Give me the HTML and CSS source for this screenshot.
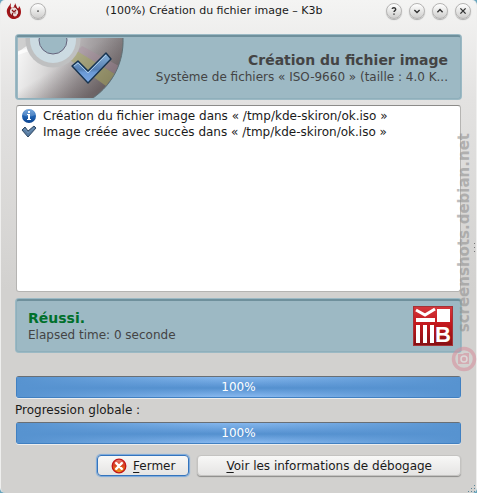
FILE: index.html
```html
<!DOCTYPE html>
<html lang="fr">
<head>
  <meta charset="UTF-8" />
  <meta name="viewport" content="width=device-width, initial-scale=1.0" />
  <title>(100%) Création du fichier image – K3b</title>
  <link rel="stylesheet" href="styles.css">
</head>
<body>
  <div class="window">
    <header class="titlebar">
      <svg class="app-icon" viewBox="0 0 16 18" aria-hidden="true">
        <path d="M5 1C3 5 0 6 1 11c1 4 4 6 7 6s7-2 7-7c0-3-1-5-2-6 0 2-1 3-2 3 0-2-1-4-2-6 0 3-1 4-3 5C4 5 5 3 5 1z" fill="#a51519"/>
        <circle cx="8" cy="10" r="4.5" fill="#eadedd"/>
        <path d="M4 6c-2 4 0 8 4 9-2-1-2-3-1-4M9 3c0 3 4 4 4 7 0 2-1 3-2 4M6 8l2 2 2-2" fill="none" stroke="#8c1719" stroke-width="1.3"/>
        <circle cx="9" cy="11" r="1" fill="#b88"/>
      </svg>
      <button class="tb-button" type="button" aria-label="Tous les bureaux">
        <svg viewBox="0 0 16 16"><circle cx="8" cy="8" r="1" fill="#444"/></svg>
      </button>
      <h1 class="caption">(100%) Création du fichier image – K3b</h1>
      <div class="tb-group">
        <button class="tb-button" type="button" aria-label="Aide">
          <svg viewBox="0 0 16 16"><path d="M5.8 5.6C6.3 3.7 10 3.8 10 6c0 1.5-2 1.6-2 3.2M8 10.8v1.4"/></svg>
        </button>
        <button class="tb-button" type="button" aria-label="Réduire">
          <svg viewBox="0 0 16 16"><path d="M5 6.8l3 3 3-3"/></svg>
        </button>
        <button class="tb-button" type="button" aria-label="Agrandir">
          <svg viewBox="0 0 16 16"><path d="M5 9.4l3-3 3 3"/></svg>
        </button>
        <button class="tb-button" type="button" aria-label="Fermer la fenêtre">
          <svg viewBox="0 0 16 16"><path d="M5 5l6 6M11 5l-6 6"/></svg>
        </button>
      </div>
    </header>

    <main class="content">
      <section class="panel job">
        <svg class="disc" viewBox="0 0 106 60" aria-hidden="true">
          <defs>
            <linearGradient id="disc" gradientUnits="userSpaceOnUse" x1="0" y1="20" x2="100" y2="50">
              <stop offset="0" stop-color="#f4f4f4"/>
              <stop offset="0.25" stop-color="#dcdbdb"/>
              <stop offset="0.6" stop-color="#aaa6a8"/>
              <stop offset="1" stop-color="#7f797b"/>
            </linearGradient>
            <linearGradient id="shade" gradientUnits="userSpaceOnUse" x1="20" y1="20" x2="50" y2="70">
              <stop offset="0.3" stop-color="#5a4e50" stop-opacity="0"/>
              <stop offset="1" stop-color="#4c4042" stop-opacity="0.55"/>
            </linearGradient>
            <linearGradient id="tick" x1="0" y1="0" x2="0" y2="1">
              <stop offset="0" stop-color="#8bb4da"/>
              <stop offset="0.55" stop-color="#557fb2"/>
              <stop offset="0.65" stop-color="#6b9ad6"/>
              <stop offset="1" stop-color="#7ba8e4"/>
            </linearGradient>
            <clipPath id="disc-edge"><path d="M0 0h105c1 24-10 46-30 60H0z"/></clipPath>
          </defs>
          <g clip-path="url(#disc-edge)">
            <path d="M0 0h106v60H0z" fill="url(#disc)"/>
            <path d="M0 0h106v60H0z" fill="url(#shade)"/>
            <path d="M0 0h20L0 14z" fill="#999" opacity="0.4"/>
            <path d="M0 13l14-4v3L0 17z" fill="#fff" opacity="0.7"/>
            <path d="M52 22l7-9 38 23-9 12z" fill="#a5a65e" opacity="0.55"/>
            <path d="M59 13l5-5 37 20-4 8z" fill="#a98d9e" opacity="0.4"/>
            <circle cx="35" cy="2" r="27.5" fill="#bfc0c1"/>
            <circle cx="35" cy="2" r="23" fill="#ccdbe2"/>
            <circle cx="35" cy="2" r="14" fill="#9db9c4" stroke="#66647c"/>
          </g>
          <path d="M105 0c1 24-10 46-30 60" fill="none" stroke="#5f7076"/>
          <path d="M54 28l6-5 10 10L88 15l5 6-23 24z" fill="url(#tick)" stroke="#17334f" stroke-width="1.4" stroke-linejoin="round"/>
          <path d="M56 28l4-3 10 10L88 17" fill="none" stroke="#b9d6ee" stroke-width="0.8"/>
        </svg>
        <div class="job-text">
          <h2 class="job-title">Création du fichier image</h2>
          <p class="job-info">Système de fichiers « ISO-9660 » (taille : 4.0 K...</p>
        </div>
      </section>

      <ul class="log">
        <li>
          <svg viewBox="0 0 16 16" aria-hidden="true">
            <defs>
              <linearGradient id="info" x1="0" y1="0" x2="0" y2="1">
                <stop offset="0" stop-color="#5291d6"/>
                <stop offset="0.5" stop-color="#2164b3"/>
                <stop offset="1" stop-color="#0b438f"/>
              </linearGradient>
            </defs>
            <circle cx="8" cy="8" r="7" fill="url(#info)"/>
            <path d="M2 7a6 6 0 0 1 12 0C10 9 6 9 2 7z" fill="#fff" opacity="0.2"/>
            <path d="M7 3h2v2H7zM6 6h3v5h1v1H6v-1h1V7H6z" fill="#fff"/>
          </svg>
          <span>Création du fichier image dans « /tmp/kde-skiron/ok.iso »</span>
        </li>
        <li>
          <svg viewBox="0 0 16 16" aria-hidden="true">
            <path d="M1 6l3-3 3 4 6-5 2 2-8 9z" fill="#587ca3" stroke="#314963" stroke-linejoin="round"/>
            <path d="M3 6l1-1 3 4 6-5" fill="none" stroke="#7294b6"/>
          </svg>
          <span>Image créée avec succès dans « /tmp/kde-skiron/ok.iso »</span>
        </li>
      </ul>

      <section class="panel result">
        <div>
          <p class="status">Réussi.</p>
          <p class="elapsed">Elapsed time: 0 seconde</p>
        </div>
        <svg class="logo" viewBox="0 0 40 40" role="img" aria-label="K3b">
          <defs>
            <linearGradient id="logo-red" x1="0" y1="0" x2="0" y2="1">
              <stop offset="0" stop-color="#d4383c"/>
              <stop offset="0.45" stop-color="#c3181d"/>
              <stop offset="1" stop-color="#851014"/>
            </linearGradient>
          </defs>
          <rect x="0.5" y="0.5" width="39" height="39" fill="url(#logo-red)" stroke="#a43236"/>
          <path d="M24 3h13v13H24zM3 12h19v4H3z" fill="#fff"/>
          <path d="M3 4l9 5 10-6" fill="none" stroke="#fff" stroke-width="3"/>
          <path d="M3 19h4v18H3zM10 19h4v18h-4zM17 19h4v18h-4z" fill="#fff"/>
          <text class="logo-letter" x="30" y="36">B</text>
        </svg>
      </section>

      <div class="bars">
        <div class="meter">
          <progress value="100" max="100" aria-label="Progression"></progress>
          <span>100%</span>
        </div>
        <label for="global">Progression globale :</label>
        <div class="meter">
          <progress id="global" value="100" max="100"></progress>
          <span>100%</span>
        </div>
      </div>

      <div class="actions">
        <button class="button default" type="button">
          <svg viewBox="0 0 16 16" aria-hidden="true">
            <defs>
              <linearGradient id="stop" x1="0" y1="0" x2="0" y2="1">
                <stop offset="0" stop-color="#e88078"/>
                <stop offset="0.45" stop-color="#d7401f"/>
                <stop offset="1" stop-color="#f5a51d"/>
              </linearGradient>
            </defs>
            <circle cx="8" cy="8" r="6.8" fill="url(#stop)" stroke="#c41517" stroke-width="1.3"/>
            <path d="M5.2 5.2l5.6 5.6M10.800 5.2l-5.6 5.6" stroke="#fff" stroke-width="2.4" stroke-linecap="round"/>
          </svg>
          <span><u>F</u>ermer</span>
        </button>
        <button class="button details" type="button"><span><u>V</u>oir les informations de débogage</span></button>
      </div>
    </main>

    <div class="watermark">
      <svg viewBox="0 0 26 26" aria-hidden="true">
        <circle cx="13" cy="13" r="10.5" fill="none" stroke="#d6929f" stroke-width="3.5"/>
        <path d="M7 8h5l1-1h5v11H7z" fill="#d6929f"/>
        <circle cx="13" cy="13" r="3" fill="#d6929f" stroke="#e4dede" stroke-width="1.5"/>
      </svg>
      <span>screenshots.debian.net</span>
    </div>
    <svg class="side-grip" viewBox="0 0 3 12" aria-hidden="true">
      <path d="M1 1h1v1H1zM1 5h1v1H1zM1 9h1v1H1z" fill="#777"/>
    </svg>
    <svg class="corner-grip" viewBox="0 0 8 8" aria-hidden="true">
      <path d="M6 0h1v1H6zM3 3h1v1H3zM6 3h1v1H6zM0 6h1v1H0zM3 6h1v1H3zM6 6h1v1H6z" fill="#5c8797"/>
    </svg>
  </div>
</body>
</html>
```

FILE: styles.css
```css
* {
  box-sizing: border-box;
}

body {
  margin: 0;
  background: #69a5bd;
  color: #1a1a1a;
  font-family: "DejaVu Sans", sans-serif;
  font-size: 12px;
  line-height: 16px;
}

h1, h2, p, ul {
  margin: 0;
  padding: 0;
}

svg {
  display: block;
}

.window {
  position: relative;
  display: flex;
  flex-direction: column;
  min-height: 100vh;
  border: 1px solid #efefee;
  border-top: 0;
  border-bottom: 0;
  border-radius: 5px;
  background: linear-gradient(#f4f4f3, #e3e2e1 100px, #d2d1cf 290px);
}

/* title bar */
.titlebar {
  display: flex;
  align-items: center;
  gap: 8px;
  padding: 2px 5px 0;
}

.app-icon {
  width: 16px;
  height: 18px;
}

.caption {
  flex: 1;
  padding-right: 4px;
  font-size: 11px;
  font-weight: normal;
  text-align: center;
  white-space: nowrap;
}

.tb-group {
  display: flex;
  gap: 7px;
}

.tb-button {
  width: 16px;
  height: 16px;
  padding: 0;
  border: 1px solid #b5b4b3;
  border-radius: 50%;
  background: linear-gradient(#fff, #cfcecd);
  box-shadow: 0 1px 1px #aaa;
}

.tb-button path {
  fill: none;
  stroke: #333;
  stroke-width: 1.6;
}

/* panels */
.content {
  display: flex;
  flex: 1;
  flex-direction: column;
  padding: 14px 14px 17px;
}

.panel {
  display: flex;
  align-items: center;
  justify-content: space-between;
  border: 1px solid #8fafbb;
  border-top: 2px solid #6f909c;
  border-radius: 3px;
  background: #9db9c4;
  color: #444;
  box-shadow: 0 0 0 1px #9bb9c4;
}

.job {
  gap: 16px;
  height: 64px;
  margin: 1px 1px 0;
  padding: 0 12px 0 1px;
}

.disc {
  flex: none;
  width: 106px;
  height: 60px;
}

.job-text {
  min-width: 0;
  text-align: right;
  white-space: nowrap;
}

.job-title {
  font-size: 14px;
  line-height: 18px;
}

.log {
  flex: 1;
  margin: 6px 1px;
  padding: 2px 4px;
  border: 1px solid #b5b4b2;
  border-top-color: #8c8b89;
  border-radius: 3px;
  background: #fff;
  list-style: none;
}

.log li {
  display: flex;
  gap: 6px;
}

.log svg {
  width: 16px;
  height: 16px;
}

.result {
  height: 53px;
  margin: 1px 1px 0;
  padding: 0 7px 0 11px;
}

.status {
  color: #00702c;
  font-size: 14px;
  font-weight: bold;
  line-height: 18px;
}

.logo {
  width: 40px;
  height: 40px;
}

.logo-letter {
  fill: #fff;
  font-family: "Liberation Sans Narrow", "Liberation Sans", sans-serif;
  font-size: 22px;
  font-weight: bold;
  text-anchor: middle;
}

/* progress bars */
.bars {
  display: flex;
  flex-direction: column;
  gap: 4px;
  margin-top: 24px;
}

.meter {
  display: grid;
  margin: 0 1px;
}

.meter progress,
.meter span {
  grid-area: 1 / 1;
}

.meter progress {
  width: 100%;
  height: 22px;
  border: 1px solid #4180c1;
  border-top-color: #696f75;
  border-radius: 3px;
  background: #5793d0;
  box-shadow: 0 1px 0 #eee;
  appearance: none;
}

.meter progress::-webkit-progress-bar {
  background: transparent;
}

.meter progress::-webkit-progress-value {
  background:
    linear-gradient(90deg, #5793d0, transparent 45%, transparent 55%, #5793d0),
    linear-gradient(#83b5ec, #5490cf 55%, #87b8ef);
}

.meter span {
  z-index: 1;
  align-self: center;
  color: #fff;
  text-align: center;
}

/* buttons */
.actions {
  display: flex;
  justify-content: flex-end;
  gap: 8px;
  margin: 11px 1px 0;
}

.button {
  display: flex;
  align-items: center;
  justify-content: center;
  gap: 6px;
  height: 21px;
  padding: 0 13px;
  border: 1px solid #c4c3c1;
  border-radius: 4px;
  background: linear-gradient(#f8f8f7, #e5e4e3);
  box-shadow: 0 1px 1px #8b8a88;
  color: inherit;
  font: inherit;
}

.button svg {
  width: 16px;
  height: 16px;
}

.button u {
  text-underline-offset: 2px;
}

.default {
  border-color: #3474bd;
  box-shadow: 0 0 1px 1px #78a8dc;
}

.details {
  padding: 0 28px;
}

/* overlays */
.watermark {
  position: absolute;
  top: 133px;
  right: -1px;
  display: flex;
  flex-direction: column-reverse;
  align-items: center;
  gap: 14px;
  opacity: 0.6;
}

.watermark span {
  color: #929292;
  font-size: 15px;
  font-weight: bold;
  writing-mode: vertical-rl;
  transform: rotate(180deg);
}

.watermark svg {
  width: 26px;
  height: 26px;
}

.side-grip {
  position: absolute;
  top: 242px;
  right: 0;
  width: 3px;
  height: 12px;
}

.corner-grip {
  position: absolute;
  right: 0;
  bottom: 0;
  width: 8px;
  height: 8px;
}
```
